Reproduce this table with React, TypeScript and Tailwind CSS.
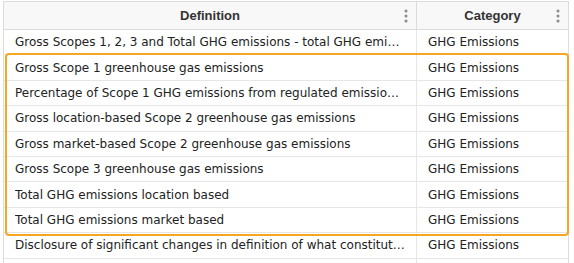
import React from 'react'

const rows = [
  'Gross Scopes 1, 2, 3 and Total GHG emissions - total GHG emissions',
  'Gross Scope 1 greenhouse gas emissions',
  'Percentage of Scope 1 GHG emissions from regulated emission trading schemes',
  'Gross location-based Scope 2 greenhouse gas emissions',
  'Gross market-based Scope 2 greenhouse gas emissions',
  'Gross Scope 3 greenhouse gas emissions',
  'Total GHG emissions location based',
  'Total GHG emissions market based',
  'Disclosure of significant changes in definition of what constitutes reporting undertaking',
  'Biogenic emissions',
]

const Dots = () => (
  <svg width="4" height="14" viewBox="0 0 4 14" className="shrink-0">
    <circle cx="2" cy="2" r="1.5" fill="#8a8a8a" />
    <circle cx="2" cy="7" r="1.5" fill="#8a8a8a" />
    <circle cx="2" cy="12" r="1.5" fill="#8a8a8a" />
  </svg>
)

export default function App() {
  return (
    <div className="w-[574px] h-[263px] overflow-hidden bg-white pl-[3px] pt-[1px]">
      <div className="w-[566px] border-l border-r border-t border-[#dcdcdc] text-[#222]">
        <div className="flex h-[28px] bg-[#f8f8f8] border-b border-[#dcdcdc] font-['Liberation_Sans',Arial,sans-serif] text-[13px] font-bold text-[#333]">
          <div className="relative flex w-[413px] items-center justify-center border-r border-[#dcdcdc]">
            Definition
            <span className="absolute right-[8px] top-[7px]"><Dots /></span>
          </div>
          <div className="relative flex flex-1 items-center justify-center">
            Category
            <span className="absolute right-[8px] top-[7px]"><Dots /></span>
          </div>
        </div>
        <div className="relative font-['DejaVu_Sans',Verdana,sans-serif] text-[12px]">
          {rows.map((r, i) => (
            <div key={i} className="flex h-[25.4px] border-b border-[#e6e6e6]">
              <div className="flex w-[413px] items-center border-r border-[#e6e6e6] px-[11px]">
                <span className="truncate">{r}</span>
              </div>
              <div className="flex flex-1 items-center px-[11px]">GHG Emissions</div>
            </div>
          ))}
          <div className="pointer-events-none absolute left-[1px] top-[23px] h-[183px] w-[564px] rounded-[4px] border-2 border-[#f5a623]" />
        </div>
      </div>
    </div>
  )
}
